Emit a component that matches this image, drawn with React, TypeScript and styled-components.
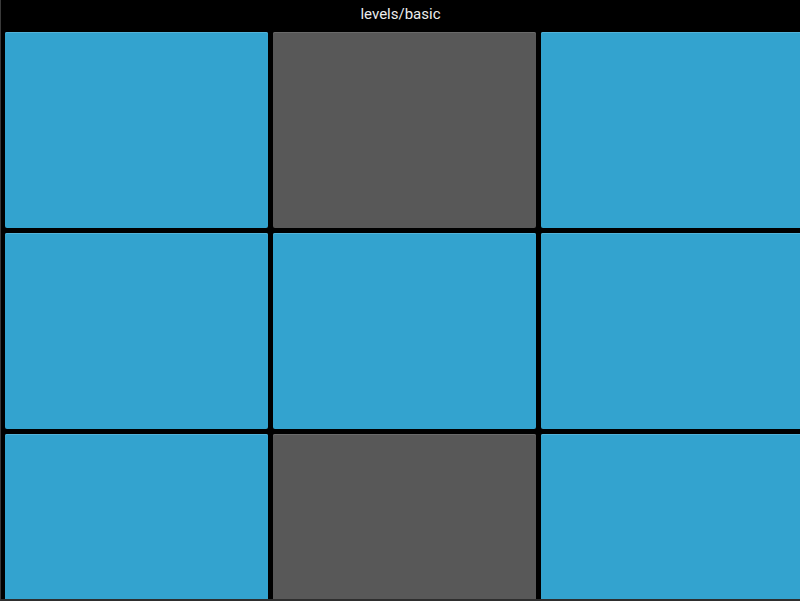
import React from "react";
import styled, { createGlobalStyle } from "styled-components";

const Global = createGlobalStyle`
  html, body { margin: 0; padding: 0; background: #000; overflow: hidden; }
  body { font-family: Roboto, "Noto Sans", sans-serif; }
`;

const Screen = styled.div`
  width: 800px;
  height: 601px;
  overflow: hidden;
  background: #000;
  border-left: 1px solid #3a3a3a;
  border-bottom: 2px solid #2e2e2e;
  box-sizing: border-box;
  display: flex;
  flex-direction: column;
`;

const TitleBar = styled.div`
  height: 28px;
  display: flex;
  align-items: center;
  justify-content: center;
  color: #ececec;
  font-size: 15px;
  flex: none;
`;

const Grid = styled.div`
  display: grid;
  grid-template-columns: repeat(3, 263px);
  grid-auto-rows: 196px;
  gap: 5px;
  padding: 4px 0 0 4px;
`;

const Pad = styled.div<{ $on: boolean }>`
  background: ${(p) => (p.$on ? "#33a3cf" : "#585858")};
  border-radius: 2px;
  box-shadow: inset 0 1px 0 ${(p) => (p.$on ? "#52b3da" : "#6a6a6a")};
`;

const pads = [true, false, true, true, true, true, true, false, true];

export default function App() {
  return (
    <Screen>
      <Global />
      <TitleBar>levels/basic</TitleBar>
      <Grid>
        {pads.map((on, i) => (
          <Pad key={i} $on={on} />
        ))}
      </Grid>
    </Screen>
  );
}
